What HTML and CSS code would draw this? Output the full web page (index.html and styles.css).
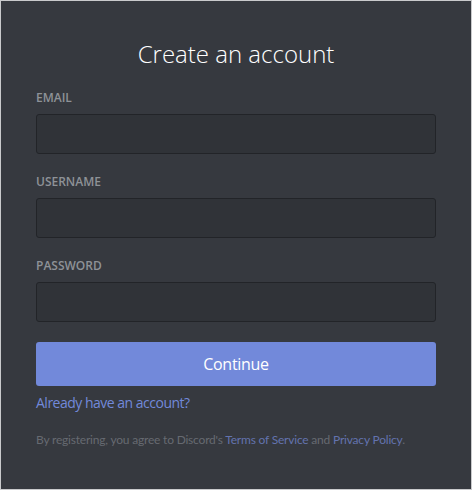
FILE: index.html
```html
<!DOCTYPE html>
<html>
<head>
<meta charset="utf-8">
<link rel="stylesheet" href="styles.css">
</head>
<body>
<div class="card">
  <h1 class="title">Create an account</h1>
  <form class="form">
    <div class="field">
      <label class="label">Email</label>
      <input class="input" type="email">
    </div>
    <div class="field">
      <label class="label">Username</label>
      <input class="input" type="text">
    </div>
    <div class="field">
      <label class="label">Password</label>
      <input class="input" type="password">
    </div>
    <button class="button" type="button">Continue</button>
    <a class="login-link">Already have an account?</a>
    <p class="terms">By registering, you agree to Discord's <a class="terms-link">Terms of Service</a> and <a class="terms-link">Privacy Policy</a>.</p>
  </form>
</div>
</body>
</html>
```
FILE: styles.css
```css
html, body {
  margin: 0;
  padding: 0;
  background: #ffffff;
}
body {
  font-family: "Open Sans", "Noto Sans", sans-serif;
}
.card {
  box-sizing: border-box;
  width: 472px;
  height: 490px;
  border: 1px solid #c9cacc;
  background: #36393f;
  padding: 38px 35px 0 35px;
  display: flex;
  flex-direction: column;
}
.title {
  margin: 0;
  font-weight: 300;
  font-size: 24px;
  line-height: 30px;
  color: #ffffff;
  text-align: center;
}
.form {
  display: flex;
  flex-direction: column;
  margin-top: 21px;
}
.field {
  display: flex;
  flex-direction: column;
  gap: 8px;
  margin-bottom: 20px;
}
.label {
  font-size: 12px;
  line-height: 16px;
  font-weight: 600;
  text-transform: uppercase;
  color: #8e9297;
}
.input {
  box-sizing: border-box;
  height: 40px;
  width: 100%;
  margin: 0;
  background: #303338;
  border: 1px solid #222428;
  border-radius: 3px;
  outline: none;
}
.button {
  height: 44px;
  width: 100%;
  border: none;
  border-radius: 3px;
  background: #7289da;
  color: #ffffff;
  font-family: inherit;
  font-size: 16px;
  font-weight: 500;
  letter-spacing: -0.3px;
  padding: 0;
}
.login-link {
  margin-top: 9px;
  font-size: 14px;
  line-height: 16px;
  letter-spacing: -0.5px;
  color: #7289da;
  align-self: flex-start;
}
.terms {
  margin: 21px 0 0 0;
  font-family: "Lato", "Open Sans", sans-serif;
  font-size: 12px;
  line-height: 16px;
  letter-spacing: -0.2px;
  color: #666a71;
  white-space: nowrap;
}
.terms-link {
  color: #6373ae;
}
```
